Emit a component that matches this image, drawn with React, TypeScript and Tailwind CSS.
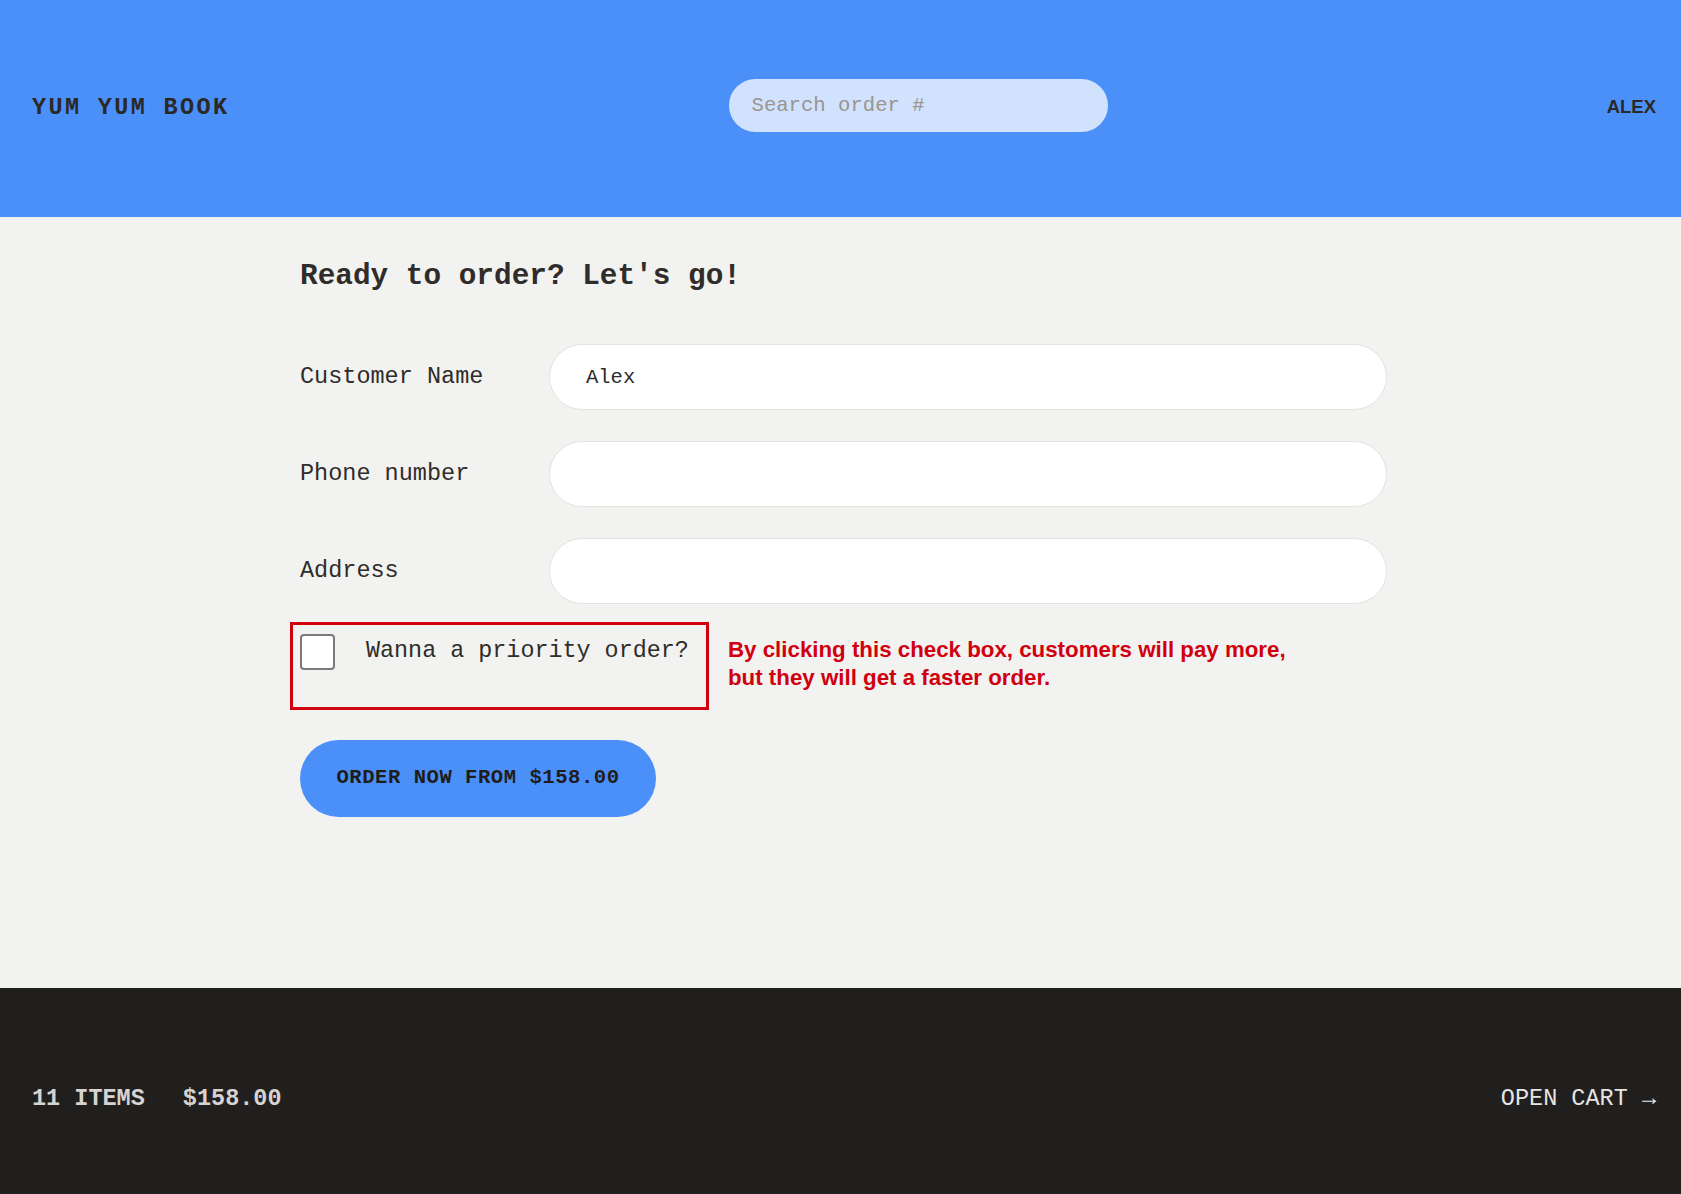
import { useState } from "react";

const mono = { fontFamily: '"Liberation Mono", "DejaVu Sans Mono", monospace' };

function Field({ label, value }: { label: string; value?: string }) {
    return (
        <div className="flex items-center">
            <label className="w-[249px] shrink-0 text-[23.5px] text-[#2f2c2a]">{label}</label>
            <input
                defaultValue={value}
                className="h-[66px] flex-1 rounded-full border border-[#e4e2df] bg-white pl-[36px] text-[20.5px] text-[#2f2c2a] outline-none"
                style={mono}
            />
        </div>
    );
}

export default function App() {
    const [priority, setPriority] = useState(false);

    return (
        <main className="flex min-h-[1194px] flex-col bg-[#f2f2f0]" style={mono}>
            {/* Header */}
            <header className="flex h-[217px] items-center justify-between bg-[#4b90f8] pb-[6px] pl-8 pr-[25px]">
                <a className="pt-[4px] text-[23.5px] font-bold tracking-[0.1em] text-[#2b2926]">YUM YUM BOOK</a>
                <input
                    placeholder="Search order #"
                    className="h-[53px] w-[379px] rounded-full bg-[#d0e2fd] px-[23px] text-[20.6px] text-[#2f2c2a] placeholder:text-[#9b948f] outline-none"
                    style={mono}
                />
                <span
                    className="pt-[2px] text-[18.5px] font-bold text-[#2b2926]"
                    style={{ fontFamily: '"Liberation Sans", Arial, sans-serif' }}
                >
                    ALEX
                </span>
            </header>

            {/* Order form */}
            <div className="flex-1">
                <div className="mx-auto w-[1093px] pl-1.5 pt-[38px]">
                    <h2 className="text-[29.4px] font-bold leading-[44px] text-[#2f2c2a]">Ready to order? Let's go!</h2>

                    <div className="mt-[45px] flex flex-col gap-[31px]">
                        <Field label="Customer Name" value="Alex" />
                        <Field label="Phone number" />
                        <Field label="Address" />
                    </div>

                    <div className="mt-[18px] flex items-start gap-[19px]">
                        <div className="-ml-[10px] h-[88px] w-[419px] border-[3px] border-[#d0000f] pl-[7px] pt-[9px]">
                            <label className="flex items-center gap-[31px]">
                                <input
                                    type="checkbox"
                                    checked={priority}
                                    onChange={(e) => setPriority(e.target.checked)}
                                    className="h-[36px] w-[35px] appearance-none rounded-[4px] border-2 border-[#7a7a7a] bg-white"
                                />
                                <span className="text-[23.4px] text-[#2f2c2a]">Wanna a priority order?</span>
                            </label>
                        </div>
                        <p
                            className="pt-[14px] text-[22.3px] font-bold leading-[28px] text-[#d0000f]"
                            style={{ fontFamily: '"Liberation Sans", Arial, sans-serif' }}
                        >
                            By clicking this check box, customers will pay more,
                            <br />
                            but they will get a faster order.
                        </p>
                    </div>

                    <button className="mt-[30px] h-[77px] w-[356px] rounded-full bg-[#4b90f8] text-[20.6px] font-bold tracking-[0.025em] text-[#1f1d1b]">
                        ORDER NOW FROM $158.00
                    </button>
                </div>
            </div>

            {/* Cart bar */}
            <footer className="flex h-[206px] items-center justify-between bg-[#201f1e] pl-8 pr-[25px] pt-4">
                <p className="flex gap-[38px] text-[23.5px] font-bold text-[#d6d3d1]">
                    <span>11 ITEMS</span>
                    <span>$158.00</span>
                </p>
                <a className="text-[23.5px] text-[#e7e5e4]">OPEN CART →</a>
            </footer>
        </main>
    );
}
